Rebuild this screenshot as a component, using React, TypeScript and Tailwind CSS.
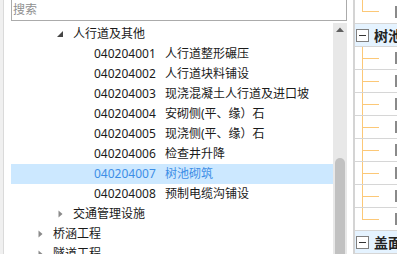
import React from "react";

type Item = {
  level: number;
  code?: string;
  label: string;
  state?: "open" | "closed";
  selected?: boolean;
};

const items: Item[] = [
  { level: 1, label: "人行道及其他", state: "open" },
  { level: 2, code: "040204001", label: "人行道整形碾压" },
  { level: 2, code: "040204002", label: "人行道块料铺设" },
  { level: 2, code: "040204003", label: "现浇混凝土人行道及进口坡" },
  { level: 2, code: "040204004", label: "安砌侧(平、缘）石" },
  { level: 2, code: "040204005", label: "现浇侧(平、缘）石" },
  { level: 2, code: "040204006", label: "检查井升降" },
  { level: 2, code: "040204007", label: "树池砌筑", selected: true },
  { level: 2, code: "040204008", label: "预制电缆沟铺设" },
  { level: 1, label: "交通管理设施", state: "closed" },
  { level: 0, label: "桥涵工程", state: "closed" },
  { level: 0, label: "隧道工程", state: "closed" },
];

const Arrow = ({ state }: { state: "open" | "closed" }) =>
  state === "open" ? (
    <svg width="6" height="6" viewBox="0 0 6 6">
      <path d="M6 0 L6 6 L0 6 Z" fill="#454545" />
    </svg>
  ) : (
    <svg width="5" height="8" viewBox="0 0 5 8">
      <path d="M0.5 0.5 L4.5 4 L0.5 7.5 Z" fill="#8a8a8a" />
    </svg>
  );

const TreeRow = ({ item }: { item: Item }) => {
  const pad = item.level === 0 ? "pl-[21px]" : item.level === 1 ? "pl-[41px]" : "pl-[83px]";
  return (
    <div
      className={`flex items-center h-[20px] shrink-0 ${pad} ${
        item.selected ? "bg-[#cce8ff] text-[#3d8ee6]" : "text-[#1a1a1a]"
      }`}
    >
      {item.state && (
        <span className="w-[16px] mr-[5px] flex items-center justify-center">
          <Arrow state={item.state} />
        </span>
      )}
      {item.code && <span className="w-[71px] shrink-0">{item.code}</span>}
      <span className="whitespace-nowrap">{item.label}</span>
    </div>
  );
};

// orange connector + checkbox edge on the right panel
const ChildRow = ({ last, h = "h-[23px]" }: { last?: boolean; h?: string }) => (
  <div className={`flex ${h} border-b border-[#d6d6d6] shrink-0`}>
    <div className="w-[40px] shrink-0 flex flex-col">
      <div className="ml-[7px] w-[17px] flex-1 border-l border-b border-[#fcc877]" />
      <div className={`ml-[7px] flex-1 ${last ? "" : "border-l border-[#fcc877]"}`} />
    </div>
    <div className="self-center w-[12px] h-[12px] border-2 border-[#8a8a8a] shrink-0" />
  </div>
);

const GroupHead = ({ label }: { label: string }) => (
  <div className="flex items-center h-[23px] shrink-0 bg-[#e5f3ff] border-b border-[#d6d6d6]">
    <div className="ml-[1px] w-[13px] h-[13px] border border-[#808080] bg-white flex items-center justify-center shrink-0">
      <div className="w-[7px] h-[1px] bg-[#333]" />
    </div>
    <span className="ml-[5px] text-[14px] font-bold text-[#222] whitespace-nowrap">{label}</span>
  </div>
);

export default function App() {
  return (
    <div className="w-[397px] h-[254px] overflow-hidden flex bg-white font-['Noto_Sans','Noto_Sans_CJK_SC',sans-serif] text-[12px]">
      {/* left edge strip */}
      <div className="w-[4px] bg-[#f0f0f0] border-r border-[#dadada] shrink-0" />

      {/* tree panel */}
      <div className="w-[349px] shrink-0 flex flex-col">
        <div className="ml-[7px] w-[336px] h-[21px] border-x border-b border-[#ababab] flex items-center pl-[1px] text-[#8f8f8f] shrink-0">
          搜索
        </div>
        <div className="mt-[2px] flex flex-1 min-h-0">
          <div className="ml-[7px] w-[322px] pt-[1px] flex flex-col overflow-hidden">
            {items.map((it, i) => (
              <TreeRow key={i} item={it} />
            ))}
          </div>
          <div className="w-[14px] bg-[#e8e8e8] flex flex-col items-center shrink-0">
            <svg width="8" height="5" viewBox="0 0 8 5" className="mt-[4px]">
              <path d="M0 5 L4 0.5 L8 5 Z" fill="#606060" />
            </svg>
            <div className="mt-[126px] w-[10px] flex-1 bg-[#c1c1c1] rounded-t-full" />
          </div>
        </div>
      </div>

      {/* splitter */}
      <div className="w-[2px] bg-[#d4d4d4] shrink-0" />

      {/* right panel */}
      <div className="flex-1 flex flex-col overflow-hidden">
        <ChildRow last h="h-[24px]" />
        <GroupHead label="树池" />
        <ChildRow />
        <ChildRow />
        <ChildRow />
        <ChildRow />
        <ChildRow />
        <ChildRow />
        <ChildRow />
        <ChildRow last />
        <GroupHead label="盖面" />
      </div>
    </div>
  );
}
